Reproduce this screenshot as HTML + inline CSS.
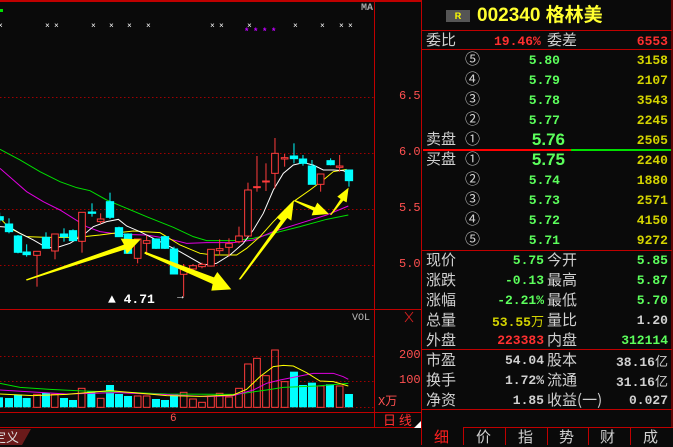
<!DOCTYPE html>
<html><head><meta charset="utf-8"><style>
*{margin:0;padding:0;box-sizing:border-box}
body{width:673px;height:445px;background:#0a0a0a;overflow:hidden;position:relative;font-family:"Liberation Sans","Noto Sans CJK SC",sans-serif}
.t{position:absolute;white-space:nowrap;line-height:1}
.lb{color:#d0d0d0;font-size:15px;font-family:"Noto Sans CJK SC","WenQuanYi Zen Hei",sans-serif}
.n{font-family:"Liberation Mono",monospace;font-weight:bold;font-size:13px}
.g{color:#5cff5c}.y{color:#d4d400}.r{color:#ff3030}.w{color:#d0d0d0}
.c{color:#d0d0d0;font-size:15px}
.ra{text-align:right}
</style></head><body>
<svg width="673" height="445" style="position:absolute;left:0;top:0">
<line x1="0" y1="1" x2="421" y2="1" stroke="#c00000" stroke-width="2"/>
<line x1="374.5" y1="0" x2="374.5" y2="428" stroke="#c00000"/>
<line x1="0" y1="309.5" x2="421" y2="309.5" stroke="#c00000"/>
<line x1="0" y1="412.5" x2="421" y2="412.5" stroke="#c00000"/>
<line x1="0" y1="427.5" x2="421" y2="427.5" stroke="#c00000"/>
<line x1="421.5" y1="0" x2="421.5" y2="445" stroke="#c00000"/>
<line x1="672" y1="0" x2="672" y2="428" stroke="#c00000"/>
<g stroke="#a00000" stroke-dasharray="1.5,2.5">
<line x1="0" y1="97.5" x2="374" y2="97.5"/><line x1="0" y1="153.5" x2="374" y2="153.5"/>
<line x1="0" y1="209.5" x2="374" y2="209.5"/><line x1="0" y1="265.5" x2="374" y2="265.5"/>
<line x1="0" y1="356.5" x2="374" y2="356.5"/><line x1="0" y1="381.5" x2="374" y2="381.5"/>
<line x1="0" y1="407.5" x2="374" y2="407.5"/>
</g>
<g fill="#fff" font-size="8" font-family="Liberation Mono">
<text x="-2" y="28">×</text><text x="45" y="28">×</text><text x="54" y="28">×</text><text x="91" y="28">×</text><text x="109" y="28">×</text><text x="127" y="28">×</text><text x="146" y="28">×</text><text x="210" y="28">×</text><text x="219" y="28">×</text><text x="247" y="28">×</text><text x="293" y="28">×</text><text x="320" y="28">×</text><text x="339" y="28">×</text><text x="348" y="28">×</text>
</g>
<g fill="#c000ff" font-size="9" font-family="Liberation Mono" font-weight="bold">
<text x="244" y="34">*</text><text x="253" y="34">*</text><text x="262" y="34">*</text><text x="271" y="34">*</text>
</g>
<rect x="0" y="9" width="3" height="3" fill="#00e000"/>
<g transform="translate(0,120) scale(0.3333)">
<g fill="none" stroke-width="3">
<polyline stroke="#00e000" points="0,88 60,120 120,155 180,185 230,203 270,212 320,240 380,265 440,290 520,322 580,350 620,362 700,362 760,355 820,340 900,320 980,298 1045,285"/>
<polyline stroke="#e000e0" points="0,145 40,180 80,215 130,245 180,270 220,295 260,320 300,335 360,343 440,345 500,355 560,370 620,368 700,368 760,360 820,335 900,310 980,285 1045,258"/>
<polyline stroke="#ffff00" points="0,295 30,325 80,350 140,352 230,352 300,345 355,338 400,333 480,338 500,350 540,375 600,400 640,405 710,405 740,385 780,350 820,305 880,245 930,210 970,180 1000,155 1040,148"/>
<polyline stroke="#ffffff" points="0,320 30,322 60,340 100,360 140,383 170,383 210,370 250,345 280,320 320,305 355,298 380,318 420,335 460,355 500,375 540,395 580,418 610,435 650,430 690,405 730,370 760,330 790,280 820,210 850,160 880,135 910,128 940,135 970,150 1000,150 1030,152 1050,162"/>
</g>
<g stroke-width="3">
<g stroke="#00ffff" fill="#00ffff">
<line x1="-1" y1="278" x2="-1" y2="308"/><rect x="-12" y="290" width="22" height="10"/>
<line x1="27" y1="295" x2="27" y2="340"/><rect x="16" y="312" width="22" height="23"/>
<line x1="54" y1="345" x2="54" y2="400"/><rect x="43" y="348" width="22" height="49"/>
<line x1="80" y1="373" x2="80" y2="410"/><rect x="69" y="396" width="22" height="8"/>
<line x1="138" y1="337" x2="138" y2="385"/><rect x="127" y="352" width="22" height="33"/>
<line x1="192" y1="325" x2="192" y2="365"/><rect x="181" y="342" width="22" height="8"/>
<line x1="219" y1="328" x2="219" y2="362"/><rect x="208" y="332" width="22" height="30"/>
<line x1="276" y1="250" x2="276" y2="290"/><rect x="265" y="276" width="22" height="4"/>
<line x1="330" y1="218" x2="330" y2="297"/><rect x="319" y="245" width="22" height="47"/>
<line x1="357" y1="320" x2="357" y2="350"/><rect x="346" y="323" width="22" height="27"/>
<line x1="384" y1="340" x2="384" y2="402"/><rect x="373" y="342" width="22" height="58"/>
<line x1="468" y1="355" x2="468" y2="387"/><rect x="457" y="357" width="22" height="28"/>
<line x1="495" y1="348" x2="495" y2="387"/><rect x="484" y="350" width="22" height="35"/>
<line x1="522" y1="380" x2="522" y2="462"/><rect x="511" y="387" width="22" height="75"/>
<line x1="882" y1="70" x2="882" y2="130"/><rect x="871" y="108" width="22" height="8"/>
<line x1="909" y1="105" x2="909" y2="137"/><rect x="898" y="117" width="22" height="13"/>
<line x1="936" y1="120" x2="936" y2="193"/><rect x="925" y="138" width="22" height="55"/>
<line x1="992" y1="115" x2="992" y2="136"/><rect x="981" y="122" width="22" height="12"/>
<line x1="1047" y1="150" x2="1047" y2="200"/><rect x="1036" y="150" width="22" height="32"/>
</g>
<g stroke="#ff3c3c" fill="#0a0a0a">
<line x1="111" y1="394" x2="111" y2="500"/><rect x="101" y="394" width="20" height="12"/>
<line x1="165" y1="342" x2="165" y2="418"/><rect x="155" y="342" width="20" height="51"/>
<line x1="246" y1="277" x2="246" y2="398"/><rect x="236" y="277" width="20" height="87"/>
<line x1="302" y1="280" x2="302" y2="312"/><rect x="292" y="297" width="20" height="8"/>
<line x1="413" y1="357" x2="413" y2="430"/><rect x="403" y="357" width="20" height="58"/>
<line x1="440" y1="347" x2="440" y2="405"/><rect x="430" y="362" width="20" height="8"/>
<line x1="551" y1="432" x2="551" y2="530"/><rect x="541" y="445" width="20" height="18"/>
<line x1="579" y1="432" x2="579" y2="460"/><rect x="569" y="437" width="20" height="10"/>
<line x1="606" y1="428" x2="606" y2="445"/><rect x="596" y="433" width="20" height="7"/>
<line x1="633" y1="388" x2="633" y2="440"/><rect x="623" y="388" width="20" height="50"/>
<line x1="659" y1="358" x2="659" y2="406"/><rect x="649" y="386" width="20" height="6"/>
<line x1="687" y1="355" x2="687" y2="410"/><rect x="677" y="371" width="20" height="11"/>
<line x1="717" y1="320" x2="717" y2="370"/><rect x="707" y="348" width="20" height="17"/>
<line x1="744" y1="188" x2="744" y2="348"/><rect x="734" y="210" width="20" height="138"/>
<line x1="771" y1="108" x2="771" y2="215"/><rect x="761" y="200" width="20" height="3"/>
<line x1="798" y1="130" x2="798" y2="213"/><rect x="788" y="183" width="20" height="3"/>
<line x1="825" y1="54" x2="825" y2="205"/><rect x="815" y="100" width="20" height="60"/>
<line x1="854" y1="102" x2="854" y2="140"/><rect x="844" y="113" width="20" height="4"/>
<line x1="962" y1="162" x2="962" y2="215"/><rect x="952" y="162" width="20" height="31"/>
<line x1="1019" y1="105" x2="1019" y2="155"/><rect x="1009" y="138" width="20" height="4"/>
</g>
</g>
<g fill="#ffff00">
<polygon points="78,478 372,374 362,356 422,358 380,402 376,388 80,482"/>
<polygon points="435,395 642,472 652,456 694,508 634,512 638,492 433,401"/>
<polygon points="716,478 842,302 830,292 882,240 874,302 862,294 722,478"/>
<polygon points="885,240 945,262 952,248 987,282 935,286 940,272 885,245"/>
<polygon points="990,285 1022,237 1012,230 1046,203 1040,247 1030,242 994,285"/>
</g>
</g>
<g transform="translate(0,300) scale(0.3333)">
<g fill="#00ffff">
<rect x="0" y="292" width="9" height="30"/><rect x="15" y="294" width="24" height="28"/><rect x="42" y="284" width="24" height="38"/><rect x="68" y="294" width="24" height="28"/>
<rect x="126" y="278" width="24" height="44"/><rect x="180" y="294" width="24" height="28"/><rect x="207" y="300" width="24" height="22"/><rect x="262" y="273" width="24" height="49"/>
<rect x="318" y="255" width="24" height="67"/><rect x="345" y="282" width="24" height="40"/><rect x="372" y="288" width="24" height="34"/><rect x="456" y="297" width="24" height="25"/><rect x="483" y="300" width="24" height="22"/><rect x="510" y="283" width="24" height="39"/>
<rect x="870" y="215" width="24" height="107"/><rect x="897" y="255" width="24" height="67"/><rect x="924" y="248" width="24" height="74"/><rect x="978" y="253" width="24" height="69"/><rect x="1035" y="282" width="24" height="40"/>
</g>
<g fill="none" stroke="#ff3c3c" stroke-width="3">
<rect x="101" y="283" width="20" height="39"/><rect x="154" y="283" width="20" height="39"/><rect x="235" y="265" width="20" height="57"/><rect x="292" y="295" width="20" height="27"/>
<rect x="403" y="288" width="20" height="34"/><rect x="430" y="288" width="20" height="34"/><rect x="541" y="277" width="20" height="45"/><rect x="569" y="297" width="20" height="25"/><rect x="596" y="307" width="20" height="15"/><rect x="623" y="288" width="20" height="34"/><rect x="649" y="280" width="20" height="42"/><rect x="677" y="291" width="20" height="31"/><rect x="707" y="265" width="20" height="57"/><rect x="734" y="192" width="20" height="130"/><rect x="761" y="175" width="20" height="147"/><rect x="788" y="227" width="20" height="95"/><rect x="815" y="150" width="20" height="172"/><rect x="844" y="245" width="20" height="77"/><rect x="952" y="258" width="20" height="64"/><rect x="1009" y="258" width="20" height="64"/>
</g>
<g fill="none" stroke-width="3">
<polyline stroke="#00e000" points="0,250 60,262 150,268 250,273 400,278 500,282 700,283 730,280 800,270 850,262 950,258 1045,250"/>
<polyline stroke="#e000e0" points="0,270 80,275 200,282 350,278 500,284 620,290 700,287 760,270 800,250 840,240 900,228 940,220 1000,220 1030,230 1045,238"/>
<polyline stroke="#ffff00" points="0,282 100,287 200,283 330,272 400,278 500,287 600,289 700,285 740,268 780,230 820,200 850,196 880,198 920,218 960,243 1000,245 1045,258"/>
</g>
</g>
<polygon points="0,429 31,429 22,445 0,445" fill="#6a1a1a"/>
<line x1="422" y1="30.5" x2="672" y2="30.5" stroke="#c00000"/>
<line x1="422" y1="49.5" x2="672" y2="49.5" stroke="#c00000"/>
<line x1="423" y1="150" x2="571" y2="150" stroke="#ff0000" stroke-width="2"/>
<line x1="571" y1="150" x2="671" y2="150" stroke="#00e000" stroke-width="2"/>
<line x1="422" y1="250.5" x2="672" y2="250.5" stroke="#c00000"/>
<line x1="422" y1="349.5" x2="672" y2="349.5" stroke="#c00000"/>
<line x1="422" y1="409.5" x2="672" y2="409.5" stroke="#c00000"/>
<line x1="463" y1="427.5" x2="673" y2="427.5" stroke="#c00000"/>
<g stroke="#c00000"><line x1="463.5" y1="427" x2="463.5" y2="445"/><line x1="505.5" y1="427" x2="505.5" y2="445"/><line x1="547.5" y1="427" x2="547.5" y2="445"/><line x1="588.5" y1="427" x2="588.5" y2="445"/><line x1="630.5" y1="427" x2="630.5" y2="445"/></g>
<path d="M405 312 L413 322 M413 312 L405 322" stroke="#d02020"/>
<polygon points="414,428 421,421 421,428" fill="#fff"/>
</svg>

<div class="t" style="left:361px;top:4px;color:#aaa;font-size:10px;font-family:'Liberation Mono';font-weight:bold">MA</div>
<div class="t" style="left:399px;top:90px;color:#ff5050;font-size:12px;font-family:'Liberation Mono'">6.5</div>
<div class="t" style="left:399px;top:146px;color:#ff5050;font-size:12px;font-family:'Liberation Mono'">6.0</div>
<div class="t" style="left:399px;top:202px;color:#ff5050;font-size:12px;font-family:'Liberation Mono'">5.5</div>
<div class="t" style="left:399px;top:258px;color:#ff5050;font-size:12px;font-family:'Liberation Mono'">5.0</div>
<div class="t" style="left:108px;top:293px;color:#fff;font-size:13px;font-family:'Liberation Mono';font-weight:bold">▲ 4.71</div>
<div class="t" style="left:175px;top:291px;color:#fff;font-size:11px">→</div>
<div class="t" style="left:352px;top:314px;color:#bbb;font-size:10px;font-family:'Liberation Mono'">VOL</div>
<div class="t" style="left:399px;top:349px;color:#ff5050;font-size:12px;font-family:'Liberation Mono'">200</div>
<div class="t" style="left:399px;top:374px;color:#ff5050;font-size:12px;font-family:'Liberation Mono'">100</div>
<div class="t" style="left:378px;top:396px;color:#ff5050;font-size:12px;font-family:'Liberation Mono','Noto Sans CJK SC',sans-serif">X万</div>
<div class="t" style="left:170px;top:414px;color:#ff5050;font-size:11px;font-family:'Liberation Mono'">6</div>
<div class="t" style="left:383px;top:413px;color:#ff3030;font-size:13px;font-family:'Noto Sans CJK SC',sans-serif">日 线</div>
<div class="t" style="left:0px;top:430px;color:#ddd;font-size:13px;font-family:'Noto Sans CJK SC',sans-serif;margin-left:-7px">定义</div>

<div class="t" style="left:446px;top:10px;width:24px;height:12px;background:#555;color:#ff0;font-size:9px;text-align:center;line-height:12px;font-weight:bold">R</div>
<div class="t" style="left:477px;top:6px;color:#ffff30;font-size:19px;font-weight:bold;font-family:'Liberation Sans','Noto Sans CJK SC',sans-serif">002340 格林美</div>
<div class="t lb" style="left:426px;top:32px">委比</div>
<div class="t n r" style="left:494px;top:35px">19.46%</div>
<div class="t lb" style="left:547px;top:32px">委差</div>
<div class="t n r ra" style="left:600px;top:35px;width:68px">6553</div>

<div class="t c" style="left:465px;top:52px">⑤</div><div class="t n g ra" style="left:500px;top:54px;width:60px">5.80</div><div class="t n y ra" style="left:600px;top:54px;width:68px">3158</div>
<div class="t c" style="left:465px;top:72px">④</div><div class="t n g ra" style="left:500px;top:74px;width:60px">5.79</div><div class="t n y ra" style="left:600px;top:74px;width:68px">2107</div>
<div class="t c" style="left:465px;top:92px">③</div><div class="t n g ra" style="left:500px;top:94px;width:60px">5.78</div><div class="t n y ra" style="left:600px;top:94px;width:68px">3543</div>
<div class="t c" style="left:465px;top:112px">②</div><div class="t n g ra" style="left:500px;top:114px;width:60px">5.77</div><div class="t n y ra" style="left:600px;top:114px;width:68px">2245</div>
<div class="t lb" style="left:426px;top:131px">卖盘</div><div class="t c" style="left:465px;top:132px">①</div><div class="t g ra" style="left:490px;top:131px;width:75px;font-size:17px;font-weight:bold">5.76</div><div class="t n y ra" style="left:600px;top:134px;width:68px">2505</div>
<div class="t lb" style="left:426px;top:151px">买盘</div><div class="t c" style="left:465px;top:152px">①</div><div class="t g ra" style="left:490px;top:151px;width:75px;font-size:17px;font-weight:bold">5.75</div><div class="t n y ra" style="left:600px;top:154px;width:68px">2240</div>
<div class="t c" style="left:465px;top:172px">②</div><div class="t n g ra" style="left:500px;top:174px;width:60px">5.74</div><div class="t n y ra" style="left:600px;top:174px;width:68px">1880</div>
<div class="t c" style="left:465px;top:192px">③</div><div class="t n g ra" style="left:500px;top:194px;width:60px">5.73</div><div class="t n y ra" style="left:600px;top:194px;width:68px">2571</div>
<div class="t c" style="left:465px;top:212px">④</div><div class="t n g ra" style="left:500px;top:214px;width:60px">5.72</div><div class="t n y ra" style="left:600px;top:214px;width:68px">4150</div>
<div class="t c" style="left:465px;top:232px">⑤</div><div class="t n g ra" style="left:500px;top:234px;width:60px">5.71</div><div class="t n y ra" style="left:600px;top:234px;width:68px">9272</div>

<div class="t lb" style="left:426px;top:252px">现价</div><div class="t n g ra" style="left:470px;top:254px;width:74px">5.75</div><div class="t lb" style="left:547px;top:252px">今开</div><div class="t n g ra" style="left:600px;top:254px;width:68px">5.85</div>
<div class="t lb" style="left:426px;top:272px">涨跌</div><div class="t n g ra" style="left:470px;top:274px;width:74px">-0.13</div><div class="t lb" style="left:547px;top:272px">最高</div><div class="t n g ra" style="left:600px;top:274px;width:68px">5.87</div>
<div class="t lb" style="left:426px;top:292px">涨幅</div><div class="t n g ra" style="left:470px;top:294px;width:74px">-2.21%</div><div class="t lb" style="left:547px;top:292px">最低</div><div class="t n g ra" style="left:600px;top:294px;width:68px">5.70</div>
<div class="t lb" style="left:426px;top:312px">总量</div><div class="t n y ra" style="left:470px;top:314px;width:74px">53.55<span style="font-weight:normal;font-family:'Noto Sans CJK SC',sans-serif">万</span></div><div class="t lb" style="left:547px;top:312px">量比</div><div class="t n w ra" style="left:600px;top:314px;width:68px">1.20</div>
<div class="t lb" style="left:426px;top:332px">外盘</div><div class="t n r ra" style="left:470px;top:334px;width:74px">223383</div><div class="t lb" style="left:547px;top:332px">内盘</div><div class="t n g ra" style="left:600px;top:334px;width:68px">312114</div>

<div class="t lb" style="left:426px;top:352px">市盈</div><div class="t n w ra" style="left:470px;top:354px;width:74px">54.04</div><div class="t lb" style="left:547px;top:352px">股本</div><div class="t n w ra" style="left:590px;top:354px;width:78px">38.16<span style="font-weight:normal;font-family:'Noto Sans CJK SC',sans-serif">亿</span></div>
<div class="t lb" style="left:426px;top:372px">换手</div><div class="t n w ra" style="left:470px;top:374px;width:74px">1.72%</div><div class="t lb" style="left:547px;top:372px">流通</div><div class="t n w ra" style="left:590px;top:374px;width:78px">31.16<span style="font-weight:normal;font-family:'Noto Sans CJK SC',sans-serif">亿</span></div>
<div class="t lb" style="left:426px;top:392px">净资</div><div class="t n w ra" style="left:470px;top:394px;width:74px">1.85</div><div class="t lb" style="left:547px;top:392px">收益(一)</div><div class="t n w ra" style="left:600px;top:394px;width:68px">0.027</div>

<div class="t" style="left:434px;top:429px;color:#ff2020;font-size:15px;font-family:'Noto Sans CJK SC',sans-serif">细</div>
<div class="t lb" style="left:476px;top:429px">价</div>
<div class="t lb" style="left:518px;top:429px">指</div>
<div class="t lb" style="left:559px;top:429px">势</div>
<div class="t lb" style="left:600px;top:429px">财</div>
<div class="t lb" style="left:643px;top:429px">成</div>
</body></html>
